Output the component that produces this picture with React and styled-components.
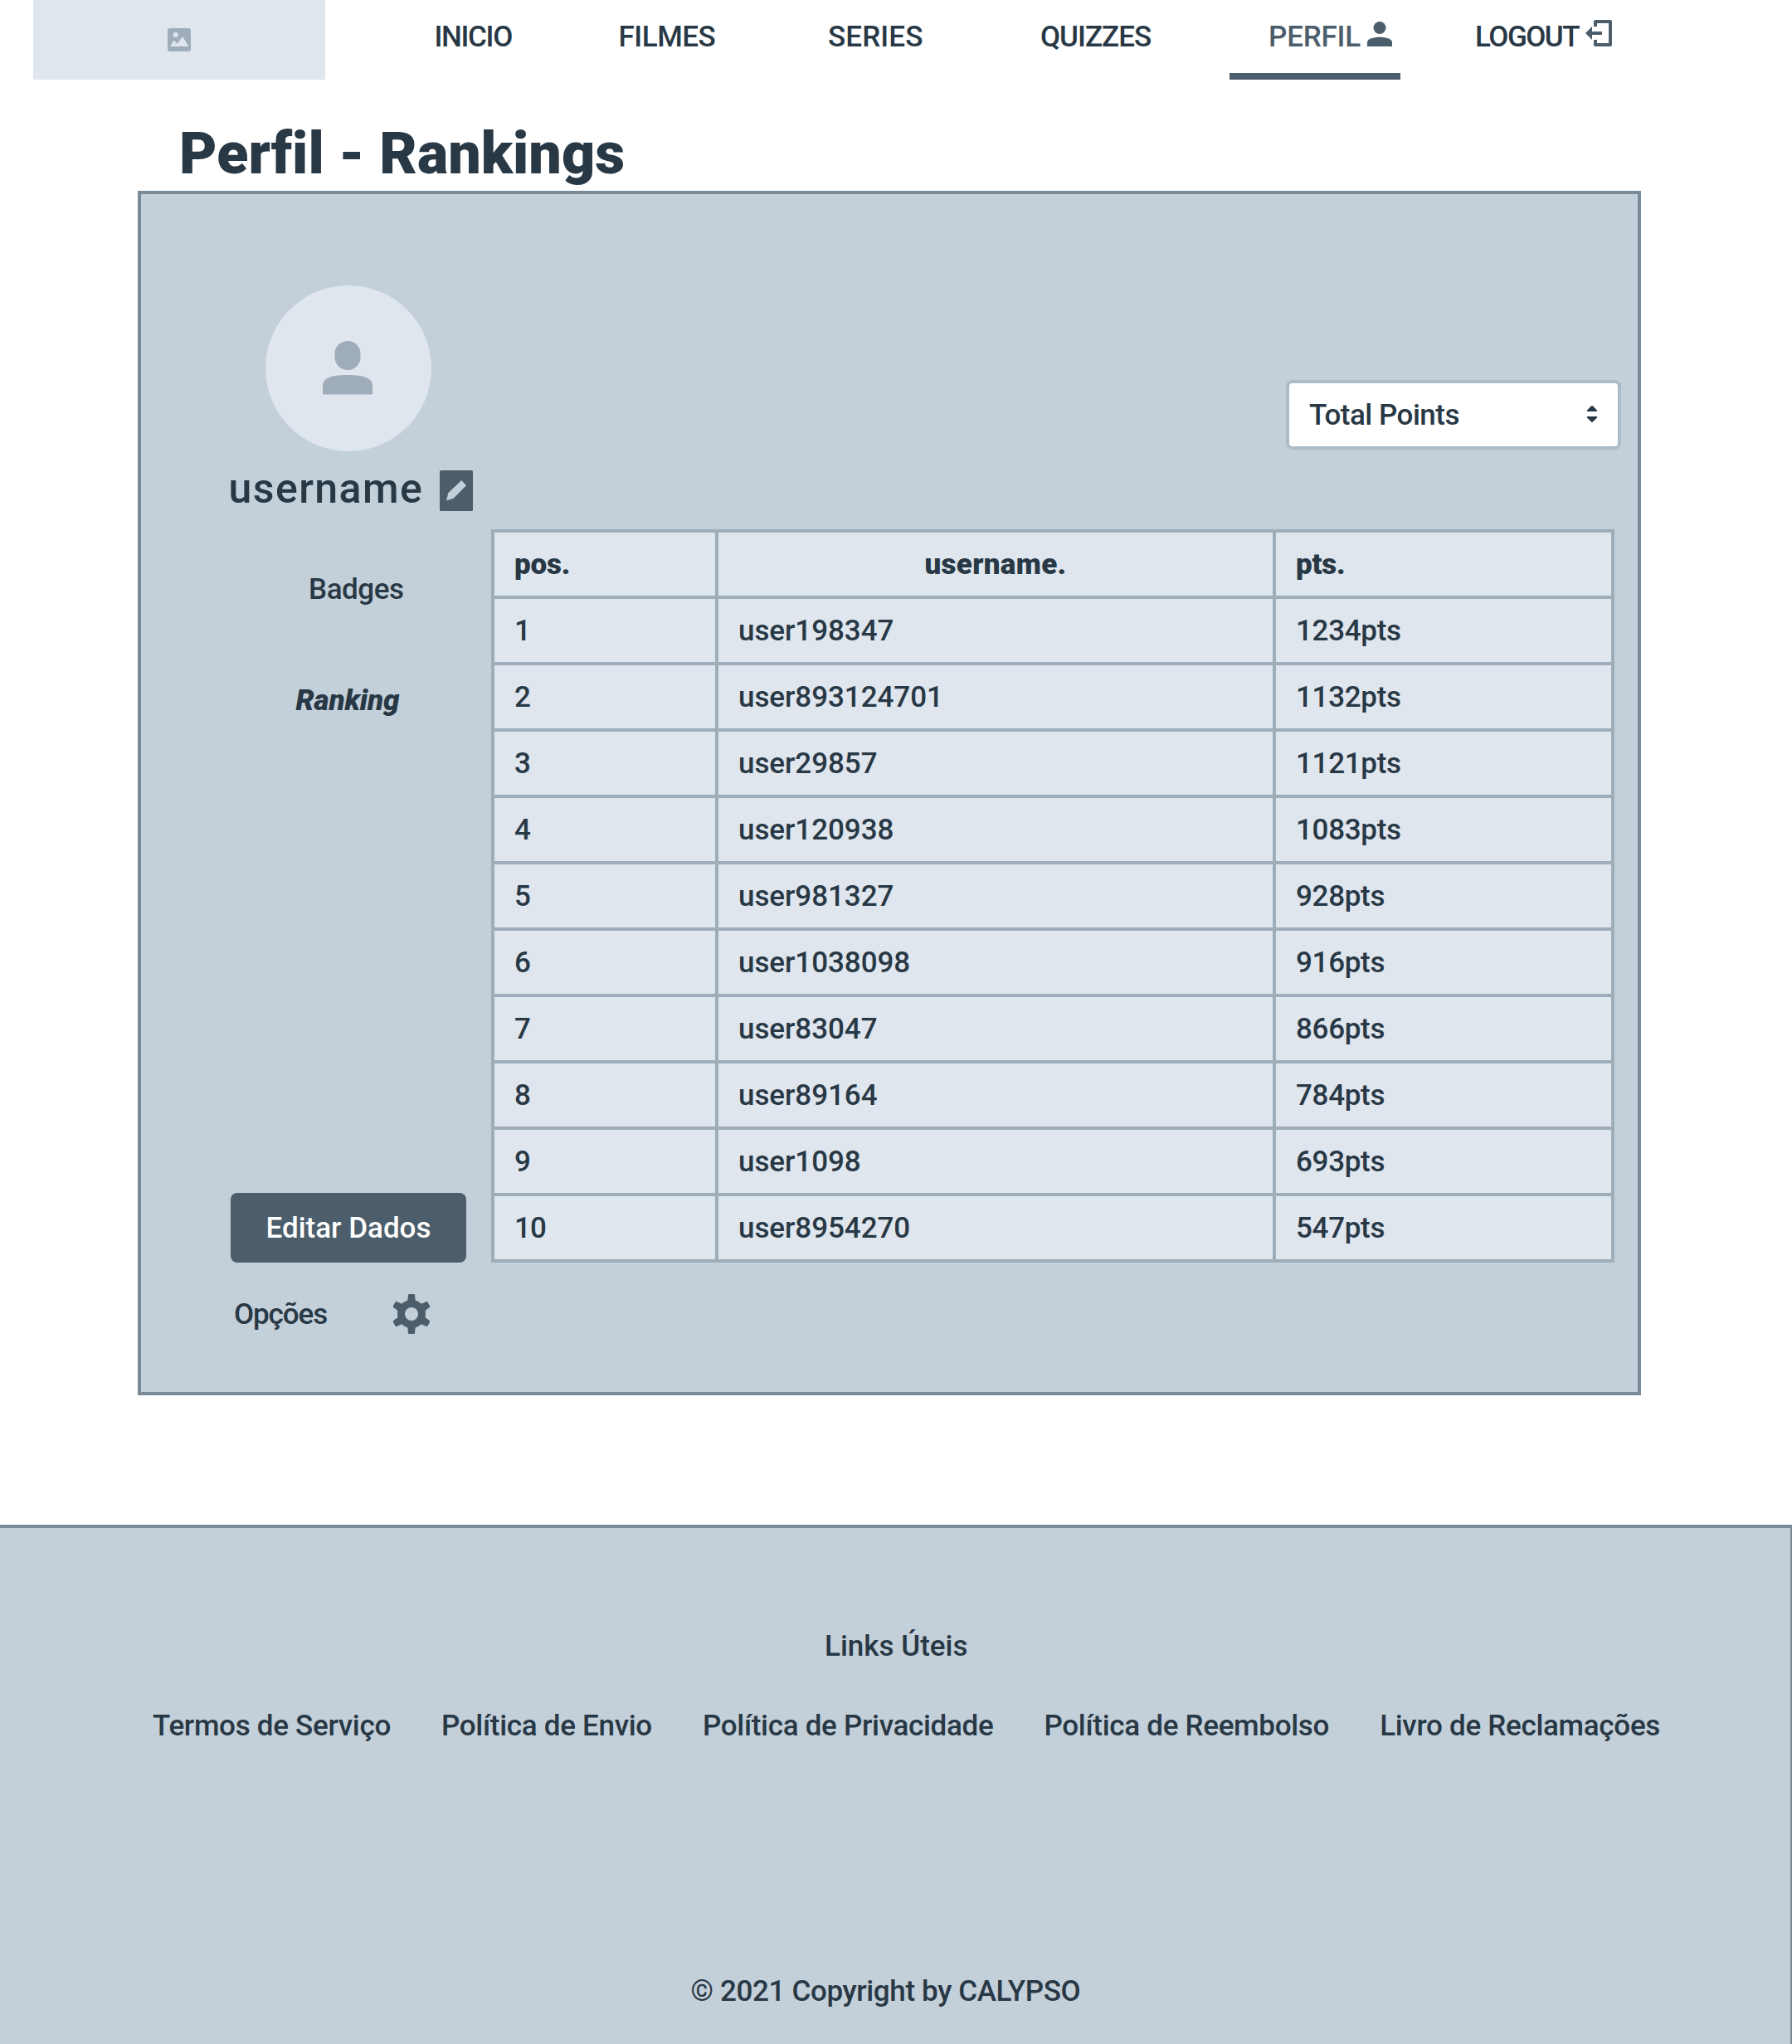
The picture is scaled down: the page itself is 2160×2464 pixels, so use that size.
import React from "react";
import styled, { createGlobalStyle } from "styled-components";

const ink = "#283845";
const slate = "#4c5d6b";
const panel = "#c3cfd9";
const pale = "#dfe6ee";
const line = "#9eadb9";
const edge = "#788997";

const GlobalStyle = createGlobalStyle`
  * { box-sizing: border-box; }
  body { margin: 0; background: #fff; }
`;

const Page = styled.div`
  width: 2160px;
  height: 2464px;
  overflow: hidden;
  display: flex;
  flex-direction: column;
  font: 500 35px/42px Roboto, "Liberation Sans", sans-serif;
  color: ${ink};
`;

const Header = styled.header`
  display: flex;
  height: 96px;
  flex: none;
  padding-left: 40px;
`;

const Logo = styled.div`
  width: 352px;
  background: ${pale};
  display: flex;
  align-items: center;
  justify-content: center;
`;

const Nav = styled.nav`
  display: grid;
  grid-template-columns: 222px 252.5px 256px 228px 296px auto;
  margin-left: 131.5px;
`;

const NavLink = styled.a`
  display: flex;
  align-items: flex-start;
  padding-top: 24px;
  letter-spacing: ${(p) => p.$tracking}px;
  white-space: nowrap;
`;

const ActiveLink = styled(NavLink)`
  width: 206px;
  padding-left: 47px;
  color: ${slate};
  border-bottom: 8px solid ${slate};
`;

const NavIcon = styled.svg`
  flex: none;
  margin: ${(p) => p.$top}px 0 0 8px;
  fill: ${slate};
`;

const Title = styled.h1`
  margin: 48px 0 4px 216px;
  font-size: 70px;
  line-height: 82px;
  font-weight: 900;
  letter-spacing: 0.05px;
`;

const Panel = styled.main`
  flex: none;
  width: 1812px;
  height: 1452px;
  margin-left: 166px;
  border: 4px solid ${edge};
  background: ${panel};
  display: grid;
  grid-template-columns: 422px 1fr;
`;

const Sidebar = styled.aside`
  display: flex;
  flex-direction: column;
  align-items: flex-start;
  padding: 110px 0 0 108px;
`;

const Avatar = styled.div`
  width: 200px;
  height: 200px;
  margin-left: 42px;
  border-radius: 50%;
  background: ${pale};
  display: flex;
  justify-content: center;
  padding: 67px 2px 0 0;
`;

const UserRow = styled.div`
  display: flex;
  align-items: flex-start;
  gap: 19.8px;
  margin: 15px 0 0 -2.5px;
`;

const UserName = styled.h2`
  margin: 0;
  font-size: 50px;
  line-height: 60px;
  font-weight: 500;
  letter-spacing: 1.45px;
`;

const EditIcon = styled.svg`
  margin-top: 8px;
`;

const MenuItem = styled.a`
  margin: 71px 0 0 94px;
  letter-spacing: -0.45px;
`;

const CurrentItem = styled.a`
  margin: 92px 0 0 78.5px;
  font-weight: 900;
  font-style: italic;
  letter-spacing: -0.15px;
`;

const Button = styled.button`
  width: 284px;
  height: 84px;
  margin-top: 572px;
  padding: 2px 0 0;
  border: 0;
  border-radius: 8px;
  background: ${slate};
  color: #fff;
  font: inherit;
`;

const OptionsRow = styled.div`
  display: flex;
  gap: 79.8px;
  margin: 38px 0 0 4px;
  line-height: 50px;
  height: 48px;
  letter-spacing: -1.1px;
`;

const Content = styled.section`
  display: flex;
  flex-direction: column;
  padding-top: 224px;
`;

const Select = styled.div`
  width: 404px;
  height: 84px;
  margin-left: 958px;
  padding: 2px 25px 0 24px;
  border: 4px solid #adbbc7;
  border-radius: 8px;
  background: #fff;
  display: flex;
  align-items: center;
  justify-content: space-between;
  letter-spacing: -0.5px;
`;

const Arrows = styled.svg`
  margin-bottom: 4px;
  fill: ${ink};
`;

const Table = styled.div`
  width: 1354px;
  margin-top: 96px;
  padding: 4px;
  background: ${line};
  display: grid;
  grid-template-columns: 266px 668px 404px;
  grid-auto-rows: 76px;
  gap: 4px;
`;

const Cell = styled.div`
  padding: 2px 0 0 24px;
  background: ${pale};
  display: flex;
  align-items: center;
  letter-spacing: ${(p) => p.$tracking || 0}px;
`;

const HeadCell = styled(Cell)`
  font-weight: 900;
  padding-left: ${(p) => (p.$center ? 0 : 24)}px;
  justify-content: ${(p) => (p.$center ? "center" : "flex-start")};
`;

const Footer = styled.footer`
  flex: 1;
  margin-top: 156px;
  padding-top: 122px;
  border: solid ${edge};
  border-width: 4px 2px 0 0;
  background: ${panel};
  display: flex;
  flex-direction: column;
`;

const FooterTitle = styled.div`
  margin-left: 994px;
`;

const FooterLinks = styled.div`
  display: flex;
  gap: 61px;
  margin: 54px 0 0 184px;
  white-space: nowrap;
`;

const FooterLink = styled.a`
  letter-spacing: -0.3px;
`;

const Copyright = styled.div`
  margin: 278px 0 0 832.6px;
  letter-spacing: -0.37px;
`;

const rows = [
  ["1", "user198347", "1234pts"],
  ["2", "user893124701", "1132pts"],
  ["3", "user29857", "1121pts"],
  ["4", "user120938", "1083pts"],
  ["5", "user981327", "928pts"],
  ["6", "user1038098", "916pts"],
  ["7", "user83047", "866pts"],
  ["8", "user89164", "784pts"],
  ["9", "user1098", "693pts"],
  ["10", "user8954270", "547pts"],
];

const footerLinks = [
  "Termos de Serviço",
  "Política de Envio",
  "Política de Privacidade",
  "Política de Reembolso",
  "Livro de Reclamações",
];

const ImageGlyph = () => (
  <svg width="28" height="28" viewBox="0 0 28 28">
    <rect width="28" height="28" rx="3" fill={line} />
    <circle cx="9.7" cy="8" r="3" fill={pale} />
    <path d="M3 22 7.7 14.5 11.7 18.7 18.2 10 25.3 22Z" fill={pale} />
  </svg>
);

const Gear = () => (
  <svg width="44" height="48" viewBox="-22 -24 44 48">
    <g fill={slate}>
      {[0, 60, 120, 180, 240, 300].map((a) => (
        <path
          key={a}
          transform={`rotate(${a})`}
          d="M-6 -14 L-4.6 -17 L-4 -23 Q-3.8 -24 -2.9 -24 H2.9 Q3.8 -24 4 -23 L4.6 -17 L6 -14Z"
        />
      ))}
    </g>
    <circle r="12.5" fill="none" stroke={slate} strokeWidth="9" />
  </svg>
);

export default function App() {
  return (
    <Page>
      <GlobalStyle />
      <Header>
        <Logo>
          <ImageGlyph />
        </Logo>
        <Nav>
          <NavLink $tracking={-1.35}>INICIO</NavLink>
          <NavLink $tracking={-0.47}>FILMES</NavLink>
          <NavLink $tracking={0.1}>SERIES</NavLink>
          <NavLink $tracking={-0.99}>QUIZZES</NavLink>
          <ActiveLink $tracking={-0.2}>
            PERFIL
            <NavIcon $top={2} width="30" height="30" viewBox="0 0 30 30">
              <circle cx="15" cy="7.5" r="7.5" />
              <path d="M0 30V25C0 21 7 18.8 15 18.8S30 21 30 25V30Z" />
            </NavIcon>
          </ActiveLink>
          <NavLink $tracking={-1.5}>
            LOGOUT
            <NavIcon $top={0} width="32" height="32" viewBox="0 0 32 32">
              <path d="M0 16 8 8V14H20V18H8V24Z" />
              <path d="M10 8V2Q10 0 12 0H30Q32 0 32 2V30Q32 32 30 32H12Q10 32 10 30V24H14V28H28V4H14V8Z" />
            </NavIcon>
          </NavLink>
        </Nav>
      </Header>

      <Title>Perfil - Rankings</Title>

      <Panel>
        <Sidebar>
          <Avatar>
            <svg width="60" height="65" viewBox="0 0 60 65" fill={line}>
              <rect x="14.5" y="0" width="31" height="35" rx="15.5" />
              <path d="M0 63V54C0 44.500 11 41 30 41S60 44.500 60 54V63Q60 64.500 58.500 64.500H1.500Q0 64.500 0 63Z" />
            </svg>
          </Avatar>
          <UserRow>
            <UserName>username</UserName>
            <EditIcon width="40" height="49" viewBox="0 0 40 49">
              <rect width="40" height="49" rx="1.5" fill={slate} />
              <path d="M8 36.500 10.300 27.300 26.300 12 32 18.300 16.700 33.800Z" fill={panel} />
            </EditIcon>
          </UserRow>
          <MenuItem>Badges</MenuItem>
          <CurrentItem>Ranking</CurrentItem>
          <Button>Editar Dados</Button>
          <OptionsRow>
            Opções
            <Gear />
          </OptionsRow>
        </Sidebar>

        <Content>
          <Select>
            Total Points
            <Arrows width="12" height="20" viewBox="0 0 12 20">
              <path d="M5 .5Q6 -.4 7 .5L12 5.500V7H0V5.500Z" />
              <path d="M5 19.500Q6 20.400 7 19.500L12 14.500V13H0V14.500Z" />
            </Arrows>
          </Select>
          <Table>
            <HeadCell $tracking={-0.2}>pos.</HeadCell>
            <HeadCell $center $tracking={0.3}>username.</HeadCell>
            <HeadCell $tracking={-0.2}>pts.</HeadCell>
            {rows.map(([pos, name, pts]) => (
              <React.Fragment key={pos}>
                <Cell $tracking={-1}>{pos}</Cell>
                <Cell $tracking={-0.06}>{name}</Cell>
                <Cell $tracking={-0.32}>{pts}</Cell>
              </React.Fragment>
            ))}
          </Table>
        </Content>
      </Panel>

      <Footer>
        <FooterTitle>Links Úteis</FooterTitle>
        <FooterLinks>
          {footerLinks.map((t) => (
            <FooterLink key={t}>{t}</FooterLink>
          ))}
        </FooterLinks>
        <Copyright>© 2021 Copyright by CALYPSO</Copyright>
      </Footer>
    </Page>
  );
}
